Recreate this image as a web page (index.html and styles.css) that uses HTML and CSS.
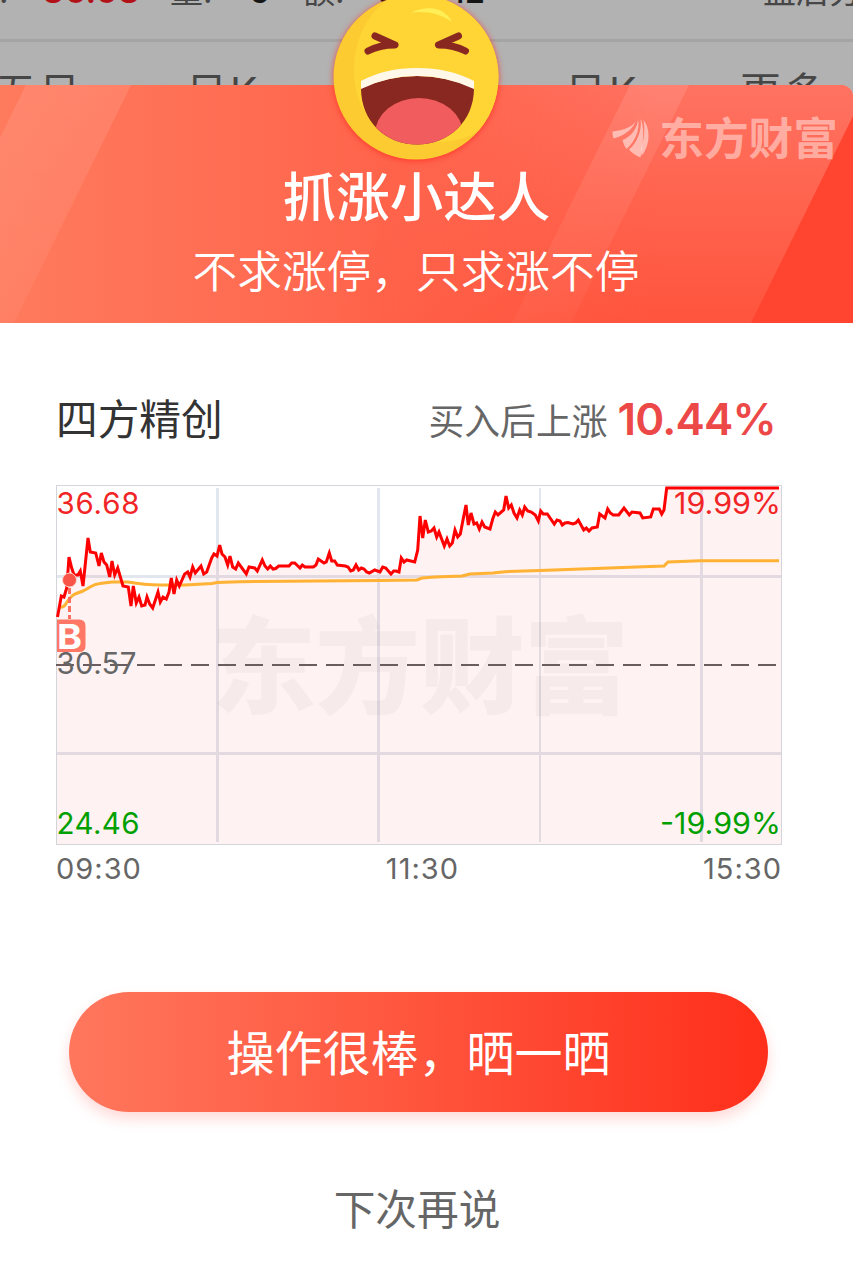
FILE: index.html
```html
<!DOCTYPE html>
<html lang="zh-CN">
<head>
  <meta charset="UTF-8" />
  <title>抓涨小达人</title>
  <meta name="viewport" content="width=device-width, initial-scale=1.0" />
  <link rel="stylesheet" href="styles.css">
</head>
<body>
  <div class="screen">

    <div class="backdrop">
      <div class="quote-row">
        <span class="quote-first">价:</span>
        <span class="quote-up">36.68</span>
        <span>量:</span>
        <span class="quote-num">6</span>
        <span>额:</span>
        <span class="quote-num">0.</span>
        <span class="quote-num">12</span>
        <span>盘后分</span>
      </div>
      <div class="tab-row">
        <span>五日</span>
        <span>日K</span>
        <span>日K</span>
        <span>更多</span>
      </div>
    </div>

    <div class="sheet">
      <div class="banner">
        <svg class="banner-bg" viewBox="0 85 853 238" aria-hidden="true">
          <defs>
            <linearGradient id="bannerBase" x1="0" y1="0" x2="1" y2="0">
              <stop offset="0" stop-color="#ff7b5e" />
              <stop offset=".45" stop-color="#ff644b" />
              <stop offset="1" stop-color="#ff5941" />
            </linearGradient>
            <linearGradient id="stripeLeft" x1="0" y1="0" x2="0" y2="1">
              <stop offset="0" stop-color="#fff" stop-opacity=".1" />
              <stop offset="1" stop-color="#fff" stop-opacity=".04" />
            </linearGradient>
            <linearGradient id="panelRight" x1="0" y1="0" x2="0" y2="1">
              <stop offset="0" stop-color="#ff7261" />
              <stop offset=".5" stop-color="#ff634e" />
              <stop offset="1" stop-color="#ff543d" />
            </linearGradient>
            <linearGradient id="panelFade" x1="0" y1="0" x2="1" y2="0">
              <stop offset="0" stop-color="#fff" stop-opacity="0" />
              <stop offset="1" stop-color="#fff" />
            </linearGradient>
            <mask id="panelMask" maskUnits="userSpaceOnUse" x="300" y="85" width="553" height="238">
              <rect x="330" y="85" width="330" height="238" fill="url(#panelFade)" />
              <rect x="659" y="85" width="194" height="238" fill="#fff" />
            </mask>
            <linearGradient id="stripeMid" x1="0" y1="0" x2="0" y2="1">
              <stop offset="0" stop-color="#fff" stop-opacity=".11" />
              <stop offset="1" stop-color="#fff" stop-opacity=".03" />
            </linearGradient>
          </defs>
          <rect x="0" y="85" width="853" height="238" fill="url(#bannerBase)" />
          <polygon points="450,85 853,85 853,323 334,323" fill="url(#panelRight)" mask="url(#panelMask)" />
          <polygon points="26,85 131,85 14,323 0,323 0,138" fill="url(#stripeLeft)" />
          <polygon points="630,85 689,85 571,323 512,323" fill="url(#stripeMid)" />
          <polygon points="853,116 853,323 751,323" fill="#ff452f" />
        </svg>
        <div class="brand">
          <svg class="brand-leaf" viewBox="0 0 36 40" aria-hidden="true">
            <path d="M24 1C22 8 13 12 0 13.500Q0 18 1 20.500C12 18 21 11 24 1Z" />
            <path d="M25.500 1C25 11 18 19 10 22Q11 27 14 31C22 24 28 12 25.500 1Z" />
            <path d="M28 1C30 12 24 26 16.500 31.500Q20 36 28 39.500C30 30 33 10 28 1Z" />
            <path d="M31 2C33 13 31 23 28.500 31L29 38C38 27 38 10 31 2Z" />
          </svg>
          <span>东方财富</span>
        </div>
        <h1>抓涨小达人</h1>
        <p class="subtitle">不求涨停，只求涨不停</p>
      </div>

      <div class="content">
        <div class="stock">
          <span class="stock-name">四方精创</span>
          <span class="stock-gain">买入后上涨 <b>10.44%</b></span>
        </div>

        <svg class="chart" viewBox="56 485 726 360">
          <rect x="56" y="485" width="726" height="360" fill="#fff" />
          <path class="grid" d="M217.500 488V842M378.500 488V842M701.500 488V842M57 576.500H781M57 753.500H781" />
          <path class="grid thin" d="M540 488V842" />
          <text class="watermark" x="211" y="705" textLength="418">东方财富</text>
          <path class="area" d="M57 617L61.300 596 64 597 66.700 588 69 557 74 575 78 575 80.300 571 83 586 88 537 90.300 552 95.700 553 99 566 101.300 553 104 562 106.700 565 109.700 577 112 561 114.700 575 117.700 568 123 586 128.300 587 131 607 133.300 586 136.300 604 139 597 141.700 607 145 605 147 597 149.700 604 152.700 608 158 592 160.300 603 163 597 166.300 599 169 592 171.300 577 174 595 176.700 580 179.300 586 184.700 574 187.700 572 190 577 192.700 567 195.300 573 201 566 203.700 574 206.700 572 211.700 558 214 554 217 556 219.700 544 222 554 225 557 227.700 565 230 555 232.700 567 235.700 569 238.300 563 246.300 574 249 567 254.700 568 257.300 571 262.300 560 267.700 569 270.300 566 278.700 566 300 567 318.300 559 324 563 329.300 552 337.300 565 350.700 571 356 565 369.300 573 382.700 567 391 575 399 572 401.300 557 414.700 562 417.700 550 420 517 422.700 540 425.300 520 428.300 532 434 528 436.700 537 439 532 444.300 547 447 539 449.700 547 455 530 460.300 534 466 505 468.300 525 471 513 474 524 479.300 529 482 522 490 529 495.300 512 503.700 510 506 496 508.700 508 511.300 505 517 518 524.700 506 538.300 522 540.700 510 554.300 524 562.300 525 578.300 520 589 531 597.300 527 599.700 513 605 518 607.700 508 613.300 515 624 508 629.300 515 640 513 642.700 518 650.700 517 653.300 509 661.700 515 666.700 488 781 488V844H57Z" />
          <rect class="frame" x="56.500" y="485.500" width="725" height="359" />
          <path class="base-line" d="M56 665H778" />
          <path class="avg-line" d="M60 607Q64 608 67 602Q71 596 75 594L83 591Q87 589 90 587Q95 584 100 583.500L112 582H128Q145 585 160 585H185L212 583.500 217 582.500 240 581.700 378 580.500 417 580 422 578 435 577 462 576 470 574 493 573 505 571.700 540 570.500 664 566 668 562 700 560.700H779" />
          <polyline class="price-line" points="57.500,617 61.300,596 64,597 66.700,588 69,557 71.700,568 74,575 78,575 80.300,571 83,586 88,538 90.300,552 95.700,553 99,566 101.300,553 104,562 106.700,565 109.700,577 112,561 114.700,575 117.700,568 123,586 128.300,587 131,606 133.300,586 136.300,603 139,597 141.700,606 145,605 147,597 149.700,604 152.700,608 158,592 160.300,602 163,597 166.300,599 169,592 171.300,578 174,594 176.700,580 179.300,586 184.700,574 187.700,572 190,577 192.700,567 195.300,573 201,566 203.700,574 206.700,572 211.700,558 214,554 217,556 219.700,545 222,554 225,557 227.700,565 230,556 232.700,567 235.700,569 238.300,563 246.300,574 249,567 254.700,568 257.300,571 262.300,560 265,566 267.700,569 270.300,566 273,569 275.700,568.500 278.700,566 289,566 291.700,563 294.700,563 300,568 302.300,565 305,567 313.300,567 316,565 318.300,559 324,563 326.300,562 329.300,553 331.700,561 334.700,561 337.300,565 345.300,566 348,567 350.700,571 353.300,570 356,565 358.700,570 361.300,568 364,569 366.700,572 369.300,573 374.700,570 380,572 382.700,567 385.700,568 391,574 393.700,571 396,571 399,572 401.300,558 404,562 406.700,560 414.700,562 417.700,550 420,516 422.700,538 425.300,520 428.300,532 431.300,531 434,528 436.700,537 439,532 444.300,546 447,539 449.700,546 452.300,543 455,530 457.700,537 460.300,534 463,520 466,505 468.300,525 471,513 474,524 476.700,523 479.300,529 482,522 484.700,527 490,529 492.700,519 495.300,512 498,515 503.700,510 506,496 508.700,508 511.300,505 514,513 517,518 519.700,510 522.300,515 524.700,507 527.700,511 531.300,512 535.300,515 538.300,521 540.700,511 543.300,514 547.300,514 554.300,524 557,520 560,521 562.300,525 565,523 568,522.500 573,524 575.700,523 578.300,520 583.700,530 586.300,528 589,531 592,528 597.300,527 599.700,514 605,518 607.700,509 610.300,513 613.300,515 618.700,515 624,508 629.300,515 632,512 640,513 642.700,518 650.700,517 653.300,509 659.300,509 661.700,514 664,510 666.700,488 779,488" />
          <path class="buy-line" d="M69.500 588V619" />
          <circle class="buy-dot" cx="69.500" cy="580" r="7" />
          <path d="M57 619.500H79Q85.500 619.500 85.500 626V646Q85.500 652 79 652H57Z" fill="#ff7766" />
          <text class="buy-mark" x="57" y="649" textLength="25" lengthAdjust="spacingAndGlyphs">B</text>
          <text class="label up" x="56.500" y="514" textLength="83">36.68</text>
          <text class="label up" x="674" y="514" textLength="107" lengthAdjust="spacingAndGlyphs">19.99%</text>
          <text class="label mid" x="56.500" y="674" textLength="80">30.57</text>
          <text class="label down" x="56.500" y="834" textLength="83">24.46</text>
          <text class="label down" x="660" y="834" textLength="121" lengthAdjust="spacingAndGlyphs">-19.99%</text>
        </svg>
        <div class="times">
          <span>09:30</span>
          <span>11:30</span>
          <span>15:30</span>
        </div>

        <button class="share">操作很棒，晒一晒</button>
        <a class="later">下次再说</a>
      </div>
    </div>

    <svg class="emoji" viewBox="320 0 190 170" aria-hidden="true">
      <defs>
        <clipPath id="face"><circle cx="416" cy="77" r="82.500" /></clipPath>
        <clipPath id="mouth"><path d="M361 88Q417 64 474 88C474 122 448 144.500 417 144.500S361 122 361 88Z" /></clipPath>
      </defs>
      <circle cx="416" cy="77" r="82.500" fill="#fccb31" />
      <path clip-path="url(#face)" d="M400 -6C370 5 354 38 354 70C354 112 380 142 418 143C445 143 470 140 484 127L510 90V-10Z" fill="#ffd535" />
      <path d="M411 12.500Q439 1 452 21.500Q434 10 411 12.500Z" fill="#ffee56" />
      <path class="eye" d="M375 36L395 45Q379 45 368 51" />
      <path class="eye" d="M458.500 36L438.500 45Q454 45 465.500 51" />
      <path class="eye-fill" d="M386 41L395 45L384 46.500Z" />
      <path class="eye-fill" d="M447.500 41L438.500 45L449.500 46.500Z" />
      <g clip-path="url(#mouth)">
        <rect x="355" y="60" width="125" height="90" fill="#892820" />
        <ellipse cx="419" cy="134" rx="44" ry="36" fill="#f15d5f" />
      </g>
      <path d="M361 81Q385 68 417 68T474 81V89Q447 76 417 76T361 89Z" fill="#fff8e9" />
    </svg>

  </div>
</body>
</html>
```
FILE: styles.css
```css
* {
  box-sizing: border-box;
}

body {
  margin: 0;
  background: #b2b2b2;
  font-family: Inter, "Noto Sans CJK SC", sans-serif;
}

.screen {
  position: relative;
  width: 853px;
  height: 1264px;
  overflow: hidden;
}

/* dimmed page behind the sheet */
.backdrop {
  height: 85px;
  overflow: hidden;
  color: #464646;
  white-space: nowrap;
}

.quote-row {
  display: grid;
  grid-template-columns: 67px 128px 79px 53px 74px 75px 312px 120px;
  margin: -31px 0 0 -25px;
  height: 73px;
  border-bottom: 3px solid #a4a4a4;
  font-size: 33px;
  line-height: 44px;
}

.quote-first {
  margin-left: -9px;
}

.quote-up {
  color: #b21217;
  font-size: 35.500px;
  font-weight: 500;
}

.quote-num {
  color: #161616;
  font-weight: 500;
}

.tab-row {
  display: grid;
  grid-template-columns: 191px 379px 175px 120px;
  margin-left: -5px;
  padding-top: 27px;
  font-size: 41px;
  letter-spacing: 3px;
  line-height: 46px;
}

.sheet {
  height: 1179px;
  background: #fff;
  border-radius: 0 12px 0 0;
  overflow: hidden;
}

.banner {
  position: relative;
  height: 238px;
  padding-top: 81px;
  color: #fff;
  text-align: center;
}

.banner-bg {
  position: absolute;
  top: 0;
  left: 0;
  width: 853px;
  height: 238px;
}

.brand {
  position: absolute;
  top: 33px;
  right: 15px;
  display: flex;
  gap: 10px;
  color: rgba(255, 255, 255, 0.45);
  font-size: 44.700px;
  font-weight: 700;
  line-height: 42px;
}

.brand-leaf {
  width: 37px;
  height: 40px;
  fill: rgba(255, 255, 255, 0.5);
}

h1 {
  position: relative;
  margin: 0 20px 0 0;
  font-size: 53.500px;
  font-weight: 500;
  line-height: 64px;
}

.subtitle {
  position: relative;
  margin: 11px 21px 0 0;
  font-size: 44.700px;
  font-weight: 350;
  line-height: 62px;
}

.content {
  display: flex;
  flex-direction: column;
  padding: 66px 71px 0 56px;
}

.stock {
  display: flex;
  justify-content: space-between;
  align-items: baseline;
  height: 96px;
  padding-right: 6px;
  line-height: 60px;
}

.stock-name {
  color: #333;
  font-size: 41.700px;
}

.stock-gain {
  color: #666;
  font-size: 35.800px;
}

.stock-gain b {
  color: #ed4848;
  font-size: 44px;
  font-weight: 600;
  letter-spacing: -0.800px;
}

.chart {
  display: block;
  width: 726px;
  height: 360px;
}

.grid {
  fill: none;
  stroke: #e2e6ee;
  stroke-width: 3;
}

.grid.thin {
  stroke-width: 2;
}

.area {
  fill: rgba(255, 0, 0, 0.05);
}

.frame {
  fill: none;
  stroke: #d3d5db;
}

.watermark {
  fill: rgba(80, 60, 60, 0.045);
  font-size: 105px;
  font-weight: 900;
}

.base-line {
  stroke: #6b5d5f;
  stroke-width: 2;
  stroke-dasharray: 18 9;
}

.avg-line {
  fill: none;
  stroke: #ffb233;
  stroke-width: 3;
}

.price-line {
  fill: none;
  stroke: #f00;
  stroke-width: 3;
}

.buy-line {
  stroke: #ff6f60;
  stroke-width: 3;
  stroke-dasharray: 6 3;
}

.buy-dot {
  fill: #f95448;
  stroke: #ffd3cc;
  stroke-width: 1;
}

.buy-mark {
  fill: #fff;
  font-size: 34px;
  font-weight: 700;
}

.label {
  font-size: 29.500px;
}

.up {
  fill: #f12525;
}

.mid {
  fill: #666;
}

.down {
  fill: #00a000;
}

.times {
  display: flex;
  justify-content: space-between;
  padding-top: 5px;
  color: #666;
  font-size: 29px;
  letter-spacing: 1px;
  line-height: 38px;
}

.share {
  width: 699px;
  height: 120px;
  margin: 104px 0 0 13px;
  padding: 0 0 5px;
  border: none;
  border-radius: 60px;
  background: linear-gradient(90deg, #ff775d, #ff5840 45%, #ff2f1b);
  box-shadow: 0 7px 14px rgba(255, 70, 60, 0.2);
  color: #fff;
  font-family: inherit;
  font-size: 48px;
}

.later {
  margin-top: 67px;
  padding-right: 4px;
  color: #666;
  font-size: 41.700px;
  line-height: 62px;
  text-align: center;
}

/* sits over both the backdrop and the banner */
.emoji {
  position: absolute;
  top: 0;
  left: 320px;
  width: 190px;
  height: 170px;
  filter: drop-shadow(0 1px 3px rgba(255, 40, 30, 0.75));
}

.eye {
  fill: none;
  stroke: #892820;
  stroke-width: 7;
  stroke-linecap: round;
  stroke-linejoin: round;
}

.eye-fill {
  fill: #892820;
}
```
